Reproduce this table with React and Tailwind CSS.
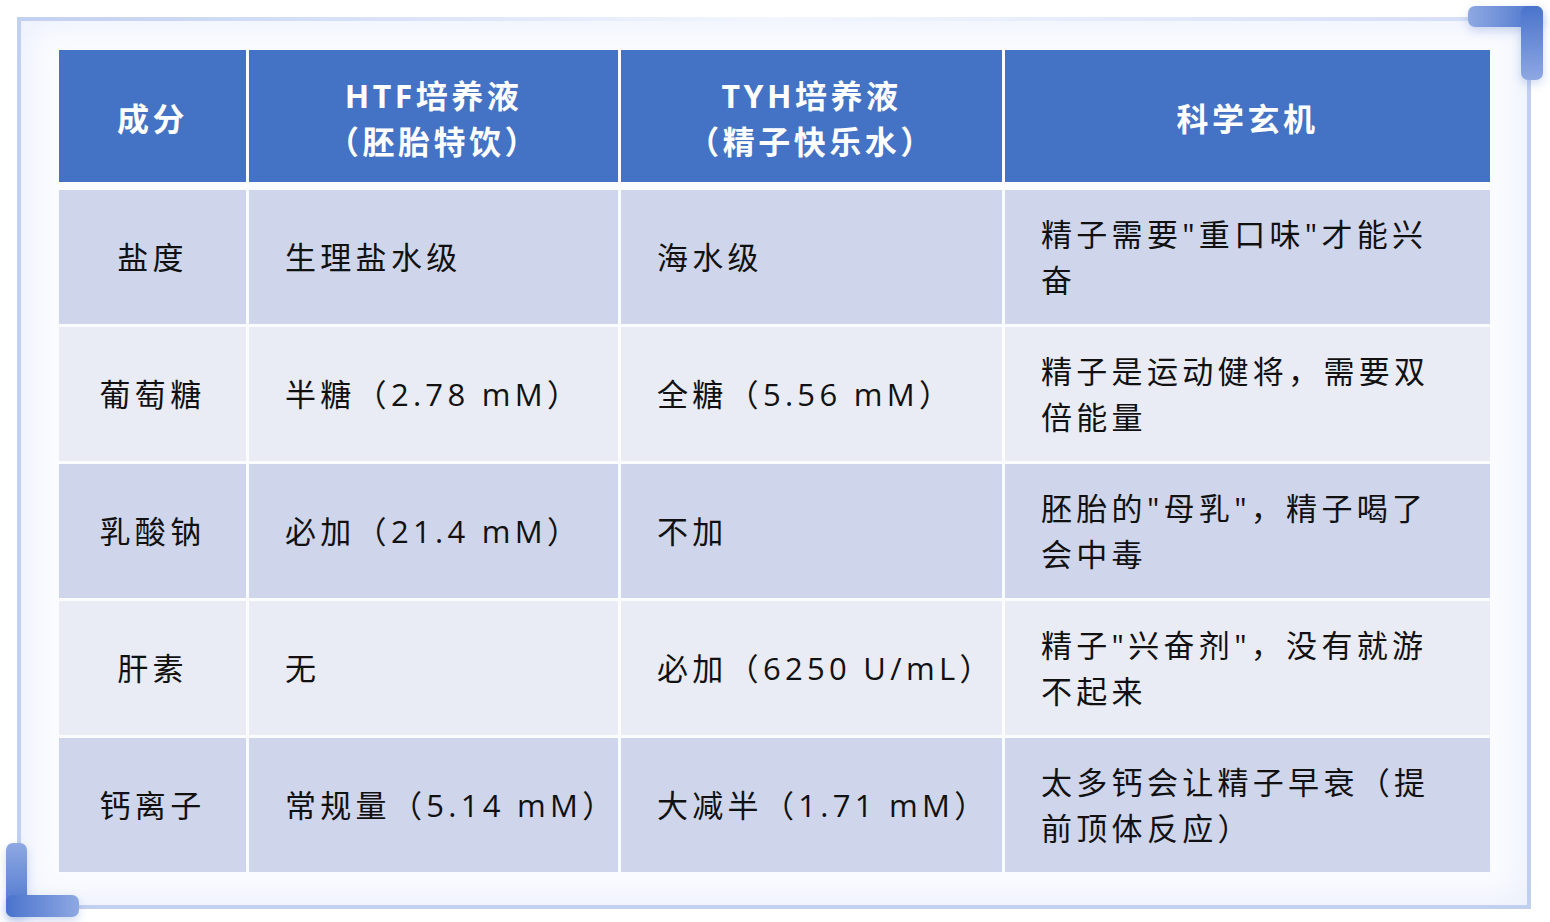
const rows = [
  { name: '盐度', htf: ['生理盐水级'], tyh: ['海水级'], note: ['精子需要"重口味"才能兴', '奋'] },
  { name: '葡萄糖', htf: ['半糖（2.78 mM）'], tyh: ['全糖（5.56 mM）'], note: ['精子是运动健将，需要双', '倍能量'] },
  { name: '乳酸钠', htf: ['必加（21.4 mM）'], tyh: ['不加'], note: ['胚胎的"母乳"，精子喝了', '会中毒'] },
  { name: '肝素', htf: ['无'], tyh: ['必加（6250 U/mL）'], note: ['精子"兴奋剂"，没有就游', '不起来'] },
  { name: '钙离子', htf: ['常规量（5.14 mM）'], tyh: ['大减半（1.71 mM）'], note: ['太多钙会让精子早衰（提', '前顶体反应）'] },
]

function Cell({ lines, center, bg, extra = '' }) {
  return (
    <div className={`${bg} ${extra} flex flex-col justify-center ${center ? 'items-center' : 'items-start pl-[36px]'}`}>
      {lines.map((l, i) => (
        <div key={i} className="whitespace-nowrap leading-[46px]">{l}</div>
      ))}
    </div>
  )
}

export default function App() {
  return (
    <div
      className="relative w-[1550px] h-[922px] bg-white p-[17px] text-[#111] text-[31px] tracking-[4.3px]"
      style={{ fontFamily: '"Open Sans", "Noto Sans CJK SC", sans-serif' }}
    >
      <div className="relative w-[1514px] h-[892px] border-l-4 border-r-4 border-b-4 border-[#c2d0f0] bg-[#fbfcff] shadow-[inset_0_0_40px_rgba(205,218,245,0.45)]">
        <div className="h-[4px] -mx-[4px] bg-gradient-to-r from-[#c2d0f0] via-[#f3f6fd] to-[#d3ddf5]" />
        <div className="pl-[38px] pt-[29px]">
          <div className="w-[1431px]">
            <div className="grid grid-cols-[187px_369px_381px_485px] gap-x-[3px] h-[132px] text-white font-bold text-[32px] tracking-[3.5px]">
              <Cell lines={['成分']} center bg="bg-[#4472c4]" extra="pt-[5px]" />
              <Cell lines={['HTF培养液', '（胚胎特饮）']} center bg="bg-[#4472c4]" extra="pt-[5px]" />
              <Cell lines={['TYH培养液', '（精子快乐水）']} center bg="bg-[#4472c4]" extra="pt-[5px]" />
              <Cell lines={['科学玄机']} center bg="bg-[#4472c4]" extra="pt-[5px]" />
            </div>
            <div className="mt-[8px] grid grid-cols-[187px_369px_381px_485px] auto-rows-[134px] gap-x-[3px] gap-y-[3px]">
              {rows.map((r, i) => {
                const bg = i % 2 === 0 ? 'bg-[#cfd5ea]' : 'bg-[#e9ebf5]'
                return [
                  <Cell key={r.name + 'a'} lines={[r.name]} center bg={bg} />,
                  <Cell key={r.name + 'b'} lines={r.htf} bg={bg} />,
                  <Cell key={r.name + 'c'} lines={r.tyh} bg={bg} />,
                  <Cell key={r.name + 'd'} lines={r.note} bg={bg} />,
                ]
              })}
            </div>
          </div>
        </div>
      </div>

      {/* corner brackets */}
      <div className="absolute left-[1468px] top-[6px] w-[75px] h-[21px] rounded-[7px] bg-gradient-to-r from-[#8ea8e2] to-[#4a73cc] shadow-[0_4px_10px_rgba(70,110,200,0.25)]" />
      <div className="absolute left-[1521px] top-[6px] w-[22px] h-[74px] rounded-[7px] bg-gradient-to-b from-[#4a73cc] to-[#8ea8e2] shadow-[0_4px_10px_rgba(70,110,200,0.25)]" />
      <div className="absolute left-[6px] top-[843px] w-[21px] h-[74px] rounded-[7px] bg-gradient-to-t from-[#4a73cc] to-[#8ea8e2] shadow-[0_4px_10px_rgba(70,110,200,0.25)]" />
      <div className="absolute left-[6px] top-[895px] w-[73px] h-[22px] rounded-[7px] bg-gradient-to-r from-[#4a73cc] to-[#8ea8e2] shadow-[0_4px_10px_rgba(70,110,200,0.25)]" />
    </div>
  )
}
